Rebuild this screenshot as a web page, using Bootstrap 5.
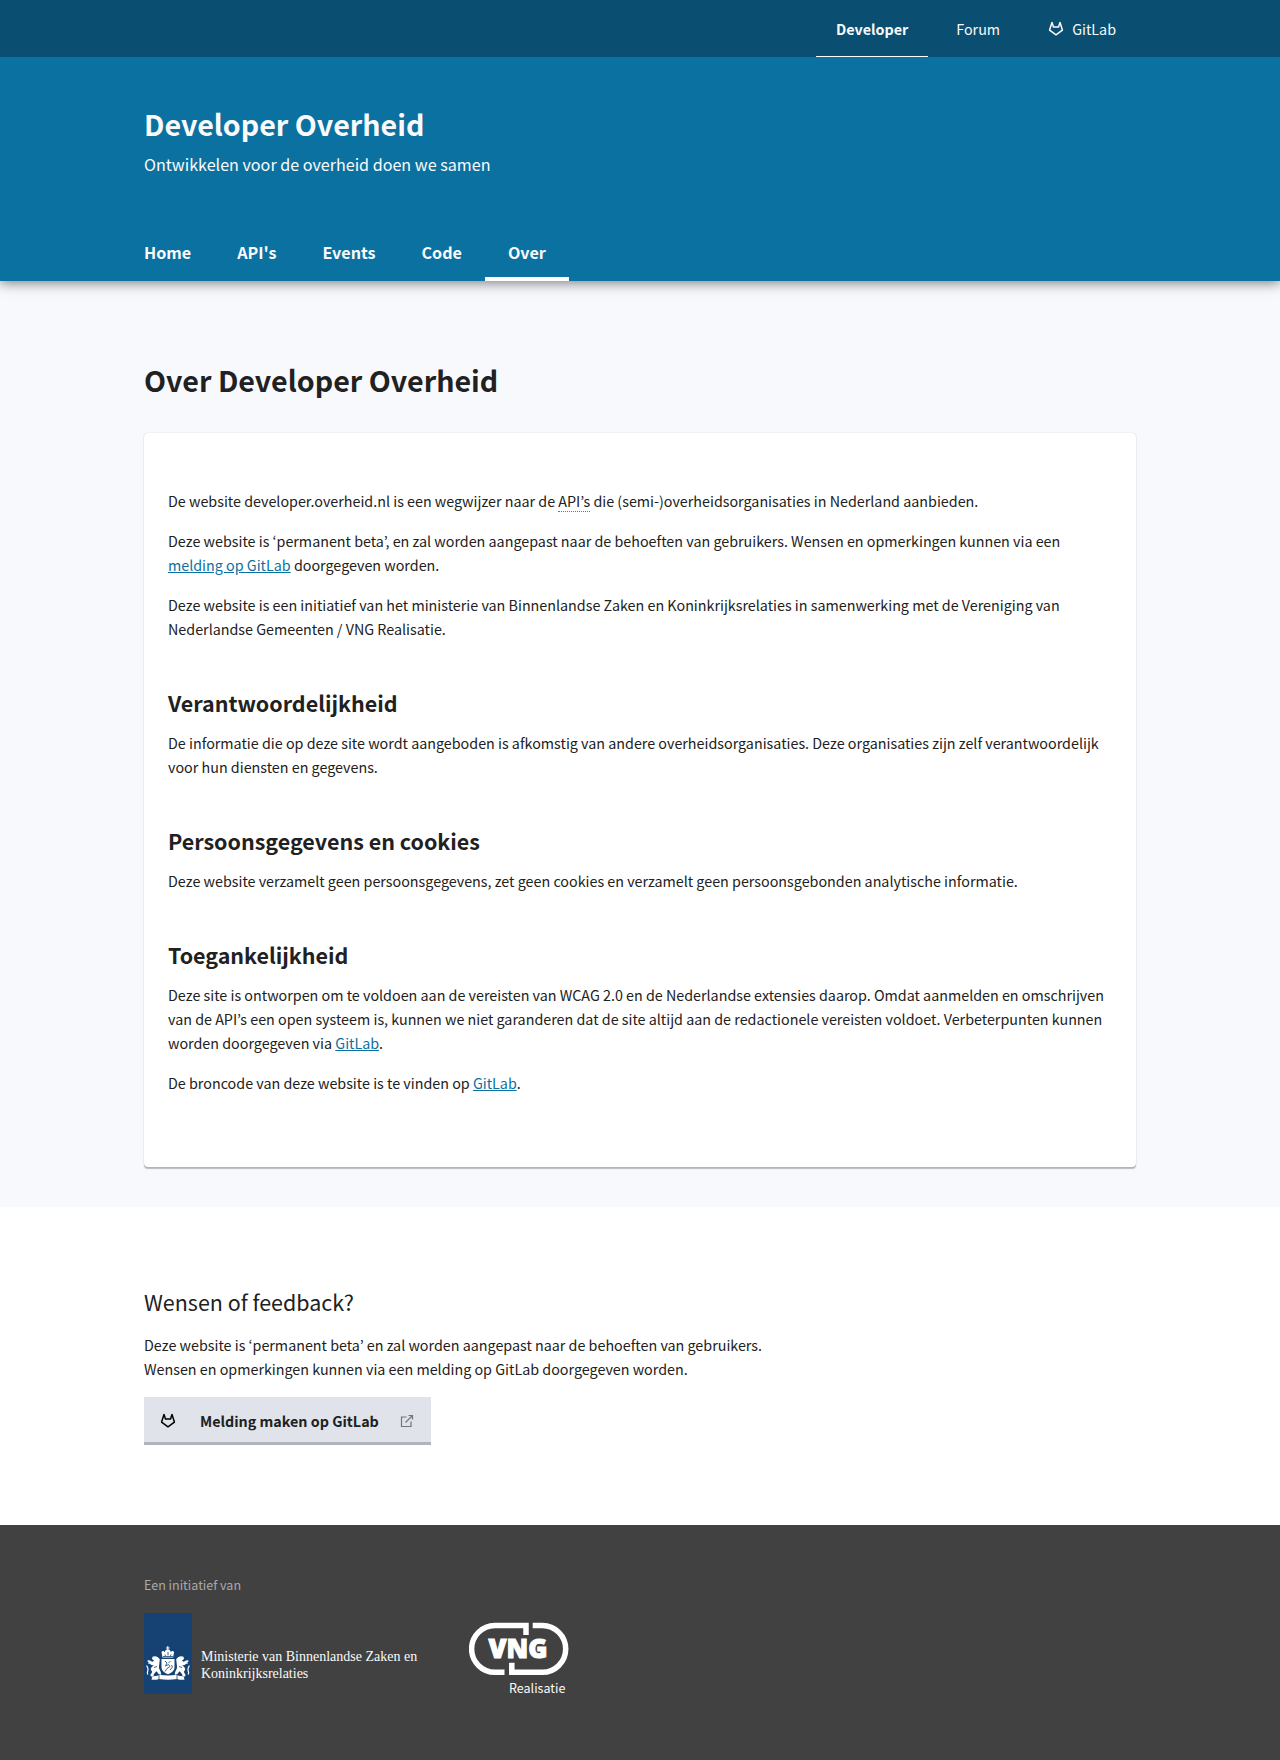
<!DOCTYPE html>
<html lang="nl">
<head>
<meta charset="utf-8">
<meta name="viewport" content="width=device-width, initial-scale=1">
<title>Over Developer Overheid</title>
<link rel="stylesheet" href="https://cdn.jsdelivr.net/npm/bootstrap@5.3.0/dist/css/bootstrap.min.css">
<style>
  body {
    font-family: "Source Sans Pro", "Noto Sans CJK KR", "Noto Sans", sans-serif;
    font-size: 16px;
    font-size-adjust: 0.486;
    line-height: 24px;
    color: #212121;
    background: #fff;
  }
  a { color: #0b71a1; }
  p { margin-bottom: 16px; }
  .page-width { max-width: 1040px; padding-left: 24px; padding-right: 24px; }
  .site-bar { background: #0a4f71; position: relative; z-index: 2; }
  .site-bar .nav { gap: 8px; }
  .site-bar .nav-link { padding: 17px 20px 15px; color: #fafafa; border-bottom: 1px solid transparent; }
  .site-bar .nav-link.active { font-weight: 600; border-bottom-color: #fff; }
  .site-head { background: #0b71a1; color: #fafafa; box-shadow: 0 2px 12px rgba(0,0,0,.5); position: relative; z-index: 1; }
  .site-title, .page-title { font-size: 32px; line-height: 40px; font-weight: 700; }
  .site-title { padding-top: 47px; }
  .tagline { font-size: 18px; line-height: 28px; margin: 6px 0 48px; }
  .main-nav { margin-left: -23px; }
  .main-nav .nav-link { font-size: 18px; line-height: 24px; font-weight: 600; color: #fafafa; padding: 14px 23px 13px; border-bottom: 4px solid transparent; }
  .main-nav .nav-link.active { border-bottom-color: #fff; }
  .about { background: #f8f9fd; padding: 79px 0 40px; }
  .page-title { margin-bottom: 33px; }
  .about-card { border: 0; border-radius: 4px; padding: 56px 24px; box-shadow: 0 0 1px rgba(0,0,0,.3), 0 2px 1px rgba(0,0,0,.25); }
  .about-card h2 { font-size: 24px; line-height: 30px; font-weight: 700; margin: 47px 0 13px; }
  .about-card abbr { text-decoration: none; border-bottom: 1px dotted #757575; cursor: help; }
  .feedback { padding: 80px 0; }
  .feedback h2 { font-size: 24px; line-height: 30px; font-weight: 400; margin-bottom: 16px; }
  .btn-report { background: #e0e3ea; color: #212121; font-weight: 600; border: 0; border-bottom: 3px solid #afb3bb; border-radius: 0; padding: 12px 16px 9px; line-height: 24px; }
  .btn-report span { margin: 0 20px 0 24px; }
  .site-foot { background: #414141; padding: 48px 0 66px; }
  .foot-label { font-size: 14px; color: #a9a9a9; margin-bottom: 16px; }
  .ministry { width: 274px; gap: 9px; margin-right: 51px; font-family: "Liberation Serif", serif; font-size: 14px; font-size-adjust: none; line-height: 17px; color: #fafafa; }
  .ministry-name { padding-top: 35px; }
  .vng-name { font-family: "Open Sans", sans-serif; font-size: 26px; font-size-adjust: none; font-weight: 800; fill: #fff; stroke: #fff; stroke-width: 1px; }
  .vng-sub { font-size: 14px; fill: #fafafa; }
</style>
<script src="https://cdn.jsdelivr.net/npm/bootstrap@5.3.0/dist/js/bootstrap.bundle.min.js"></script>
</head>
<body>
<div class="site-bar">
  <div class="container-fluid page-width">
    <nav class="nav justify-content-end" aria-label="Websites">
      <a class="nav-link active" aria-current="true" href="#">Developer</a>
      <a class="nav-link" href="#">Forum</a>
      <a class="nav-link d-flex align-items-center gap-2" href="#">
        <svg width="16" height="16" viewBox="0 0 16 16" fill="none" stroke="currentColor" stroke-width="1.5" stroke-linejoin="round" aria-hidden="true"><path d="M4 1.500 1.600 9.100 8 13.800l6.400-4.700L12 1.500l-1.500 4.400h-5z"/></svg>
        GitLab
      </a>
    </nav>
  </div>
</div>
<header class="site-head">
  <div class="container-fluid page-width">
    <div class="site-title">Developer Overheid</div>
    <p class="tagline">Ontwikkelen voor de overheid doen we samen</p>
    <nav class="nav main-nav" aria-label="Hoofdmenu">
      <a class="nav-link" href="#">Home</a>
      <a class="nav-link" href="#">API's</a>
      <a class="nav-link" href="#">Events</a>
      <a class="nav-link" href="#">Code</a>
      <a class="nav-link active" aria-current="page" href="#">Over</a>
    </nav>
  </div>
</header>
<main>
  <section class="about">
    <div class="container-fluid page-width">
      <h1 class="page-title">Over Developer Overheid</h1>
      <article class="card about-card">
        <p>De website developer.overheid.nl is een wegwijzer naar de <abbr title="Application Programming Interfaces">API’s</abbr> die (semi-)overheidsorganisaties in Nederland aanbieden.</p>
        <p>Deze website is ‘permanent beta’, en zal worden aangepast naar de behoeften van gebruikers. Wensen en opmerkingen kunnen via een <a href="#">melding op GitLab</a> doorgegeven worden.</p>
        <p class="mb-0">Deze website is een initiatief van het ministerie van Binnenlandse Zaken en Koninkrijksrelaties in samenwerking met de Vereniging van Nederlandse Gemeenten / VNG Realisatie.</p>
        <h2>Verantwoordelijkheid</h2>
        <p class="mb-0">De informatie die op deze site wordt aangeboden is afkomstig van andere overheidsorganisaties. Deze organisaties zijn zelf verantwoordelijk voor hun diensten en gegevens.</p>
        <h2>Persoonsgegevens en cookies</h2>
        <p class="mb-0">Deze website verzamelt geen persoonsgegevens, zet geen cookies en verzamelt geen persoonsgebonden analytische informatie.</p>
        <h2>Toegankelijkheid</h2>
        <p>Deze site is ontworpen om te voldoen aan de vereisten van WCAG 2.0 en de Nederlandse extensies daarop. Omdat aanmelden en omschrijven van de API’s een open systeem is, kunnen we niet garanderen dat de site altijd aan de redactionele vereisten voldoet. Verbeterpunten kunnen worden doorgegeven via <a href="#">GitLab</a>.</p>
        <p>De broncode van deze website is te vinden op <a href="#">GitLab</a>.</p>
      </article>
    </div>
  </section>
  <section class="feedback">
    <div class="container-fluid page-width">
      <h2>Wensen of feedback?</h2>
      <p>Deze website is ‘permanent beta’ en zal worden aangepast naar de behoeften van gebruikers.<br>Wensen en opmerkingen kunnen via een melding op GitLab doorgegeven worden.</p>
      <a class="btn btn-report d-inline-flex align-items-center" href="#">
        <svg width="16" height="16" viewBox="0 0 16 16" fill="none" stroke="#000" stroke-width="1.5" stroke-linejoin="round" aria-hidden="true"><path d="M4 1.500 1.600 9.100 8 13.800l6.400-4.700L12 1.500l-1.500 4.400h-5z"/></svg>
        <span>Melding maken op GitLab</span>
        <svg width="16" height="16" viewBox="0 0 16 16" fill="none" stroke="#757575" stroke-width="1.2" aria-hidden="true"><path d="M7.500 4H2.500v9.500h9.500V8.500M9.500 2.500h4v4M13.500 2.500 6.500 9.500"/></svg>
      </a>
    </div>
  </section>
</main>
<footer class="site-foot">
  <div class="container-fluid page-width">
    <p class="foot-label">Een initiatief van</p>
    <div class="d-flex align-items-start flex-wrap">
      <div class="ministry d-flex">
        <svg class="flex-shrink-0" width="48" height="81" viewBox="0 0 48 81" role="img" aria-label="Rijkswapen">
          <path fill="#154273" d="M0 0h48v81H0z"/>
          <g fill="#fff">
            <path d="M23.300 33h1v1.500h1.300v1h-1.300v1.200h-1v-1.200H22v-1h1.300z"/>
            <path d="M18.500 44.500 17.500 39c1-1.800 3-1 3.300.3.200-2.300 2-3 3-3s2.800.7 3 3c.3-1.300 2.300-2.100 3.300-.3l-1 5.500z"/>
            <path d="M17.500 46h13v8c0 4-3.500 6-6.500 7.300-3-1.300-6.500-3.300-6.500-7.300z"/>
            <path d="M15.800 46.500c-1-2.600-4.500-4.300-7.300-2.800L8 46l2 1.500-1.300 1.300c-1.700-.6-3-2.300-4.700-1.300l-1 .4 1.800 1.400-1 1.200 2.200.2c1 1.300 2.500 1.800 4 1.600-1.500 1-3.200 2.200-3.200 4.200l1.400 2.500c-.8 1.500-2 2.200-1.700 4h3c0-2 1.500-3.200 3-4.700l2.500 3.200h2.200c-.2-4-2.700-5.500-2.200-8z"/>
            <path d="M32.200 46.500c1-2.600 4.500-4.300 7.300-2.800L40 46l-2 1.500 1.300 1.300c1.700-.6 3-2.300 4.700-1.300l1 .4-1.800 1.400 1 1.200-2.200.2c-1 1.300-2.500 1.800-4 1.600 1.500 1 3.200 2.200 3.200 4.200l-1.400 2.500c.8 1.500 2 2.200 1.700 4h-3c0-2-1.500-3.200-3-4.700l-2.500 3.200h-2.200c.2-4 2.700-5.500 2.200-8z"/>
            <path d="M7 63.500c3-.8 5.500.1 8.500-1.800 5.500 1 11.500 1 17 0 3 1.900 5.500 1 8.500 1.800l-1.300 1.300 1 1.800c-2.700.3-5 .5-7.500-.7-6 1.100-12.400 1.100-18.400 0-2.500 1.200-4.800 1-7.500.7l1-1.800z"/>
          </g>
          <g fill="none" stroke="#154273" stroke-width=".8">
            <path d="m5 44 2 1.500M3 57.500c1-2 2.500-1 2.500.5s1.300 1.200 2 .8M43 44l-2 1.500M21 41.500l.5 1.500M24 39v3.500M27 41.500l-.5 1.500M19 43.500h10"/>
            <path d="m21 48 2 2-1.500 3 3-1.500 1.500 2-3 2-2 3M26.500 48.500l-2 1M27.500 52l1 2-2.500 3M10 54.500l3-1M38 54.500l-3-1"/>
            <path d="M15 61v5M33 61v5"/>
          </g>
          <path fill="none" stroke="#fff" stroke-width="1.200" d="M4 61.500c-2-2 .5-3 0-5.500s-1.500-2-1-3.500M44 61.500c2-2-.5-3 0-5.500s1.500-2 1-3.500"/>
        </svg>
        <div class="ministry-name text-nowrap">Ministerie van Binnenlandse Zaken en<br>Koninkrijksrelaties</div>
      </div>
      <svg width="100" height="88" viewBox="0 0 100 88" role="img" aria-label="VNG Realisatie">
        <g fill="none" stroke="#fff" stroke-width="5.500">
          <path d="M57 22V12.500H26a23.400 23.400 0 0 0 0 46.800H35.500"/>
          <path d="M63.700 12.500H73.300a23.400 23.400 0 0 1 0 46.800H42.800V49.700"/>
        </g>
        <text class="vng-name" x="49" y="45" text-anchor="middle">VNG</text>
        <text class="vng-sub" x="40" y="80">Realisatie</text>
      </svg>
    </div>
  </div>
</footer>
</body>
</html>
